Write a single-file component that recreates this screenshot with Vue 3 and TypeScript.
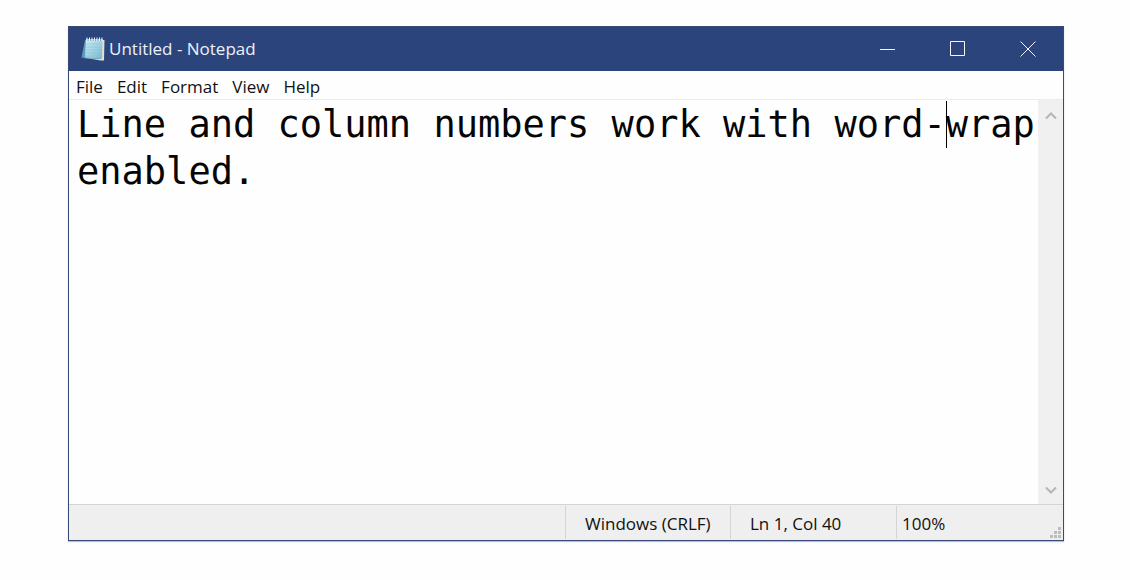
<script setup lang="ts">
import { ref } from 'vue'

const menus: string[] = ['File', 'Edit', 'Format', 'View', 'Help']
const content = ref<string>('Line and column numbers work with word-wrap enabled.')
const column = 40
const caretStyle = { left: `calc(8px + ${column - 1}ch)` }
</script>

<template>
  <main class="desktop">
    <section class="window" aria-label="Untitled - Notepad">
      <header class="titlebar">
        <svg class="app-icon" viewBox="0 0 24 24" aria-hidden="true">
          <defs>
            <linearGradient id="pad" x1="0" y1="0" x2="1" y2="1">
              <stop offset="0" stop-color="#d3f0f6" />
              <stop offset="0.5" stop-color="#a5d6e5" />
              <stop offset="1" stop-color="#78b5cd" />
            </linearGradient>
          </defs>
          <path d="M5 21 20 23.500 23 23.500 23.500 3 20 3z" fill="#ecdcc8" />
          <path d="M4 3 .5 20.500 5.500 21.500 20 22 21 3z" fill="#5d9cb9" />
          <path d="M5 2 21.500 2 21 21.500 4 20.500z" fill="url(#pad)" />
          <path d="M5 7H21M5 10H21M5 13H21M4.500 16H21M4 19H21" stroke="#83bfd4" stroke-width="0.600" />
          <path d="M6 .5V4M8.500 .5V4M11 .5V4M13.500 .5V4M16 .5V4M18.500 .5V4M21 .5V4" stroke="#edf8fa" stroke-width="1" />
          <path d="M7 2V4M9.500 2V4M12 2V4M14.500 2V4M17 2V4M19.500 2V4" stroke="#5d8ca8" stroke-width="0.700" />
        </svg>
        <h1 class="title">Untitled - Notepad</h1>
        <div class="controls">
          <button type="button" aria-label="Minimize">
            <svg viewBox="0 0 16 16"><path d="M0 8.500H15" /></svg>
          </button>
          <button type="button" aria-label="Maximize">
            <svg viewBox="0 0 16 16"><path d="M.5.5H14.500V14.500H.5z" /></svg>
          </button>
          <button type="button" aria-label="Close">
            <svg viewBox="0 0 16 16"><path d="M.5.5 15.500 15.500M15.500 .5.5 15.500" /></svg>
          </button>
        </div>
      </header>
      <nav class="menubar" aria-label="Menu">
        <button v-for="menu in menus" :key="menu" type="button">{{ menu }}</button>
      </nav>
      <div class="editor">
        <div class="page">
          <textarea v-model="content" aria-label="Text editor" spellcheck="false"></textarea>
          <span class="caret" :style="caretStyle"></span>
        </div>
        <div class="scrollbar">
          <button type="button" aria-label="Scroll up">
            <svg viewBox="0 0 12 9"><path d="M1 7.500 6 2.500 11 7.500" /></svg>
          </button>
          <button type="button" aria-label="Scroll down">
            <svg viewBox="0 0 12 9"><path d="M1 1.500 6 6.500 11 1.500" /></svg>
          </button>
        </div>
      </div>
      <footer class="statusbar">
        <span class="cell"></span>
        <span class="cell ending">Windows (CRLF)</span>
        <span class="cell position">Ln 1, Col {{ column }}</span>
        <span class="cell zoom">100%</span>
        <svg class="grip" viewBox="0 0 12 12" aria-hidden="true">
          <path d="M8 0h3v3h-3zM4 4h3v3h-3zM8 4h3v3h-3zM0 8h3v3h-3zM4 8h3v3h-3zM8 8h3v3h-3z" />
        </svg>
      </footer>
    </section>
  </main>
</template>

<style>
body {
  margin: 0;
  background: #fefefe;
}
</style>

<style scoped>
.desktop {
  box-sizing: border-box;
  display: flex;
  min-height: 100vh;
  padding: 26px 66px 39px 68px;
  font-family: "Open Sans", "Noto Sans", sans-serif;
  font-size: 17px;
  color: #111;
}
.window {
  flex: 1;
  min-width: 0;
  display: flex;
  flex-direction: column;
  border: 1px solid #3a4a78;
  background: #fefefe;
  box-shadow: 0 1px 1px #bcc1d0;
}
button {
  display: flex;
  align-items: center;
  justify-content: center;
  padding: 0;
  border: 0;
  background: none;
  color: inherit;
  font: inherit;
}
svg {
  display: block;
}
.titlebar {
  display: flex;
  align-items: center;
  height: 44px;
  padding-left: 12px;
  background: #2b457c;
  color: #edf1f8;
}
.app-icon {
  width: 24px;
  height: 24px;
}
.title {
  flex: 1;
  margin: 0 0 0 4px;
  font-size: 17px;
  font-weight: 400;
  line-height: 44px;
}
.controls {
  display: flex;
  align-self: stretch;
}
.controls button {
  width: 70px;
}
.controls svg {
  width: 16px;
  height: 16px;
  fill: none;
  stroke: #f4f6fa;
  stroke-width: 1;
}
.menubar {
  display: flex;
  gap: 14px;
  height: 28px;
  padding: 0 7px;
  border-bottom: 1px solid #ececec;
}
.menubar button {
  padding-top: 3px;
}
.editor {
  flex: 1;
  display: flex;
}
.page {
  position: relative;
  flex: 1;
  display: flex;
  font-family: "DejaVu Sans Mono", "Liberation Mono", monospace;
  font-size: 37px;
  line-height: 47px;
}
textarea {
  flex: 1;
  min-width: 0;
  padding: 1px 0 0 8px;
  border: 0;
  outline: 0;
  resize: none;
  overflow: hidden;
  background: #fefefe;
  color: #050505;
  font: inherit;
}
.caret {
  position: absolute;
  top: 1px;
  width: 1px;
  height: 47px;
  background: #000;
}
.scrollbar {
  box-sizing: border-box;
  display: flex;
  flex-direction: column;
  justify-content: space-between;
  width: 25px;
  padding-top: 2px;
  background: #f0f0f0;
}
.scrollbar button {
  height: 27px;
}
.scrollbar svg {
  width: 12px;
  height: 9px;
  fill: none;
  stroke: #b5b5b5;
  stroke-width: 2;
}
.statusbar {
  position: relative;
  display: flex;
  height: 35px;
  border-top: 1px solid #d4d4d4;
  background: #efefef;
}
.cell {
  flex: 1;
  box-sizing: border-box;
  margin: 1px 0;
  line-height: 35px;
  white-space: nowrap;
}
.ending,
.position,
.zoom {
  flex: none;
  border-left: 1px solid #d4d4d4;
}
.ending {
  width: 165px;
  padding-left: 19px;
}
.position {
  width: 166px;
  padding-left: 19px;
}
.zoom {
  width: 167px;
  padding-left: 5px;
}
.grip {
  position: absolute;
  right: 1px;
  bottom: 1px;
  width: 12px;
  height: 12px;
  fill: #bcbcbc;
}
</style>
